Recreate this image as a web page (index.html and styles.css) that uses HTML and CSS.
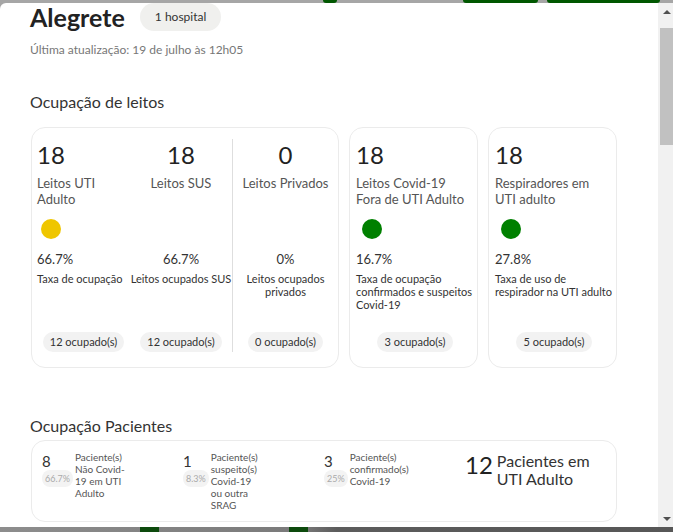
FILE: index.html
```html
<!DOCTYPE html>
<html lang="pt-BR">
<head>
    <meta charset="UTF-8">
    <meta name="viewport" content="width=device-width, initial-scale=1.0">
    <title>Alegrete - Leitos</title>
    <link rel="stylesheet" href="styles.css">
</head>
<body>
    <div class="map-strip map-top">
        <span class="map-spot spot-a"></span>
        <span class="map-spot spot-b"></span>
        <span class="map-spot spot-c"></span>
    </div>

    <div class="modal">
        <div class="modal-body">
            <header class="city-header">
                <h1>Alegrete</h1>
                <span class="tag">1 hospital</span>
            </header>
            <p class="updated">Última atualização: 19 de julho às 12h05</p>

            <h2 class="section-title">Ocupação de leitos</h2>
            <div class="beds">
                <div class="card bed-card wide">
                    <div class="stat">
                        <div class="stat-num">18</div>
                        <div class="stat-label">Leitos UTI Adulto</div>
                        <span class="dot yellow"></span>
                        <div class="stat-pct">66.7%</div>
                        <div class="stat-desc">Taxa de ocupação</div>
                        <span class="pill">12 ocupado(s)</span>
                    </div>
                    <div class="stat center">
                        <div class="stat-num">18</div>
                        <div class="stat-label">Leitos SUS</div>
                        <span class="dot blank"></span>
                        <div class="stat-pct">66.7%</div>
                        <div class="stat-desc">Leitos ocupados SUS</div>
                        <span class="pill">12 ocupado(s)</span>
                    </div>
                    <div class="stat center split">
                        <div class="stat-num">0</div>
                        <div class="stat-label">Leitos Privados</div>
                        <span class="dot blank"></span>
                        <div class="stat-pct">0%</div>
                        <div class="stat-desc">Leitos ocupados privados</div>
                        <span class="pill">0 ocupado(s)</span>
                    </div>
                </div>

                <div class="card bed-card">
                    <div class="stat">
                        <div class="stat-num">18</div>
                        <div class="stat-label">Leitos Covid-19 Fora de UTI Adulto</div>
                        <span class="dot green"></span>
                        <div class="stat-pct">16.7%</div>
                        <div class="stat-desc">Taxa de ocupação confirmados e suspeitos Covid-19</div>
                        <span class="pill">3 ocupado(s)</span>
                    </div>
                </div>

                <div class="card bed-card">
                    <div class="stat">
                        <div class="stat-num">18</div>
                        <div class="stat-label">Respiradores em UTI adulto</div>
                        <span class="dot green"></span>
                        <div class="stat-pct">27.8%</div>
                        <div class="stat-desc">Taxa de uso de respirador na UTI adulto</div>
                        <span class="pill">5 ocupado(s)</span>
                    </div>
                </div>
            </div>

            <h2 class="section-title patients-title">Ocupação Pacientes</h2>
            <div class="card patients">
                <div class="patient">
                    <div class="patient-figures">
                        <span class="patient-count">8</span>
                        <span class="share">66.7%</span>
                    </div>
                    <div class="patient-text">Paciente(s) Não Covid-19 em UTI Adulto</div>
                </div>
                <div class="patient">
                    <div class="patient-figures">
                        <span class="patient-count">1</span>
                        <span class="share">8.3%</span>
                    </div>
                    <div class="patient-text">Paciente(s) suspeito(s) Covid-19 ou outra SRAG</div>
                </div>
                <div class="patient">
                    <div class="patient-figures">
                        <span class="patient-count">3</span>
                        <span class="share">25%</span>
                    </div>
                    <div class="patient-text">Paciente(s) confirmado(s) Covid-19</div>
                </div>
                <div class="patient total">
                    <span class="patient-count">12</span>
                    <div class="patient-text">Pacientes em UTI Adulto</div>
                </div>
            </div>
        </div>

        <!-- scrollbar of the modal as it was captured -->
        <div class="scrollbar">
            <div class="scroll-btn">
                <svg width="8" height="4" viewBox="0 0 8 4"><path d="M0 4 L4 0 L8 4 Z" fill="#505050"/></svg>
            </div>
            <div class="scroll-track">
                <div class="scroll-thumb"></div>
            </div>
            <div class="scroll-btn down">
                <svg width="8" height="4" viewBox="0 0 8 4"><path d="M0 0 L8 0 L4 4 Z" fill="#505050"/></svg>
            </div>
        </div>
    </div>

    <div class="map-strip map-bottom">
        <span class="map-spot spot-d"></span>
        <span class="map-spot spot-e"></span>
    </div>
</body>
</html>
```

FILE: styles.css
```css
* {
    box-sizing: border-box;
}

body {
    margin: 0;
    height: 532px;
    overflow: hidden;
    background: #a5a5a5;
    font-family: 'Lato', 'Noto Sans', sans-serif;
    color: #333;
}

/* bits of the map behind the modal */
.map-strip {
    display: flex;
}

.map-top {
    height: 3px;
    background: #a6a6a6;
}

.map-bottom {
    height: 5px;
    background: linear-gradient(to right, #8d8d8d, #7a7a7a 45%, #5c5c5c 50%, #575757);
}

.map-spot {
    display: block;
    height: 100%;
    background: #005700;
}

.spot-a {
    width: 14px;
    margin-left: 323px;
    border-radius: 0 0 7px 7px;
}

.spot-b {
    width: 75px;
    margin-left: 126px;
    border-radius: 0 0 8px 8px;
}

.spot-c {
    width: 113px;
    margin-left: 9px;
    border-radius: 0 0 8px 8px;
}

.spot-d {
    width: 19px;
    margin-left: 140px;
    background: #0d4a0d;
}

.spot-e {
    width: 19px;
    margin-left: 130px;
    background: #0d4a0d;
}

/* modal */
.modal {
    display: flex;
    width: 675px;
    height: 524px;
    background: #fff;
    border-radius: 6px 0 0 0;
    overflow: hidden;
}

.modal-body {
    flex: 1;
    padding-left: 30px;
    overflow: hidden;
}

.scrollbar {
    display: flex;
    flex-direction: column;
    width: 17px;
    background: #f1f1f1;
}

.scroll-btn {
    display: flex;
    justify-content: center;
    height: 17px;
    padding-top: 7px;
}

.scroll-btn.down {
    padding-top: 7px;
}

.scroll-btn svg {
    display: block;
}

.scroll-track {
    flex: 1;
    padding: 8px 2px 0;
}

.scroll-thumb {
    height: 117px;
    background: #c1c1c1;
}

.city-header {
    display: flex;
    align-items: center;
    gap: 15px;
}

.city-header h1 {
    margin: 0;
    font-size: 25px;
    line-height: 28px;
    font-weight: 700;
    color: #222;
}

.tag {
    height: 28px;
    line-height: 28px;
    padding: 0 15px;
    border-radius: 14px;
    background: #f0f0ee;
    font-size: 12px;
    color: #333;
}

.updated {
    margin: 12px 0 0;
    font-size: 12px;
    line-height: 14px;
    color: #777;
}

.section-title {
    margin: 35px 0 0;
    font-size: 16px;
    line-height: 19px;
    font-weight: 400;
    color: #333;
}

.patients-title {
    margin-top: 48px;
}

/* cards */
.card {
    border: 1px solid #ebebeb;
    border-radius: 14px;
    background: #fff;
}

.beds {
    display: flex;
    gap: 10px;
    margin: 16px 0 0 1px;
}

.bed-card {
    display: flex;
    width: 129px;
    height: 241px;
    padding: 11px 3px 15px 6px;
}

.bed-card.wide {
    display: grid;
    grid-template-columns: 93px 102px 1fr;
    width: 308px;
    padding: 11px 0 15px 5px;
}

.stat {
    display: flex;
    flex-direction: column;
    flex: 1;
}

.stat.center {
    text-align: center;
}

.stat.split {
    border-left: 1px solid #dedede;
}

.stat-num {
    margin-top: 2px;
    font-size: 24px;
    line-height: 28px;
    color: #222;
}

.stat-label {
    min-height: 32px;
    margin-top: 6px;
    font-size: 13px;
    line-height: 16px;
    color: #555;
}

.dot {
    width: 20px;
    height: 20px;
    margin: 12px 0 0 6px;
    border-radius: 50%;
}

.wide .dot {
    margin-left: 4px;
}

.dot.yellow {
    background: #efc600;
}

.dot.green {
    background: #008000;
}

.dot.blank {
    background: none;
}

.stat-pct {
    margin-top: 12px;
    font-size: 13px;
    line-height: 16px;
    color: #333;
}

.stat-desc {
    margin-top: 5px;
    font-size: 11px;
    line-height: 13px;
    color: #333;
}

.pill {
    align-self: center;
    margin-top: auto;
    height: 20px;
    line-height: 20px;
    padding: 0 7px;
    border-radius: 10px;
    background: #f2f2f2;
    font-size: 11px;
    color: #333;
}

/* patients */
.patients {
    display: grid;
    grid-template-columns: repeat(4, 1fr);
    width: 586px;
    height: 82px;
    margin: 5px 0 0 1px;
    padding: 10px 10px 0;
}

.patient {
    display: flex;
    align-items: flex-start;
    gap: 2px;
}

.patient-figures {
    display: flex;
    flex-direction: column;
    align-items: flex-start;
    padding-top: 2px;
}

.patient-count {
    font-size: 15px;
    line-height: 17px;
    color: #333;
}

.share {
    padding: 0 3px;
    border-radius: 8px;
    background: #f3f3f3;
    font-size: 9px;
    line-height: 17px;
    color: #aaa;
}

.patient-text {
    width: 50px;
    font-size: 10px;
    line-height: 12px;
    color: #555;
}

.patient.total {
    gap: 4px;
}

.patient.total .patient-count {
    font-size: 24px;
    line-height: 28px;
    color: #222;
}

.patient.total .patient-text {
    width: auto;
    margin-top: 1px;
    font-size: 16px;
    line-height: 18px;
    color: #333;
}
```
